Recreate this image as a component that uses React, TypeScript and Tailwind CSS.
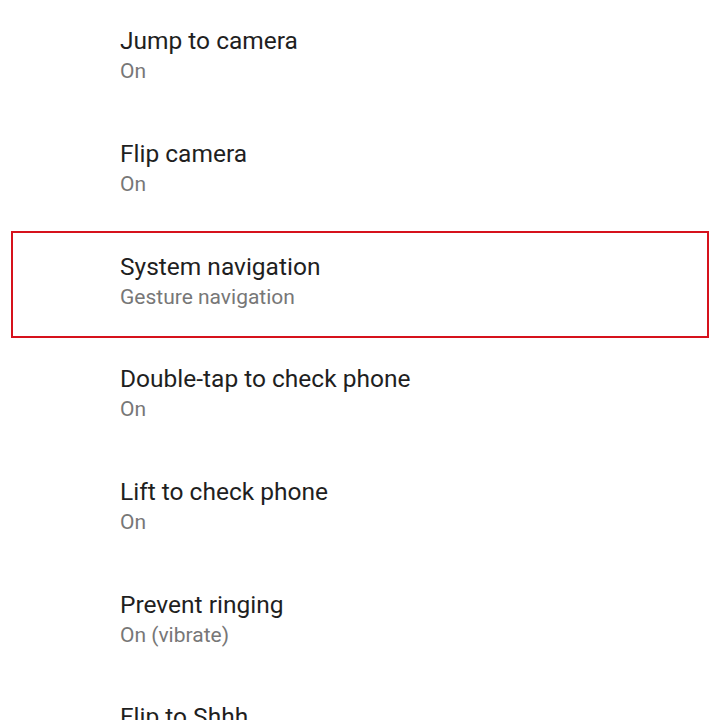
const items = [
  { title: "Jump to camera", subtitle: "On" },
  { title: "Flip camera", subtitle: "On" },
  { title: "System navigation", subtitle: "Gesture navigation" },
  { title: "Double-tap to check phone", subtitle: "On" },
  { title: "Lift to check phone", subtitle: "On" },
  { title: "Prevent ringing", subtitle: "On (vibrate)" },
  { title: "Flip to Shhh", subtitle: "\u00a0" },
];

export default function App() {
  return (
    <div className="relative h-[720px] w-[720px] overflow-hidden bg-white font-['Roboto',sans-serif]">
      {items.map((item) => (
        <div
          key={item.title}
          className="flex h-[112.67px] shrink-0 flex-col justify-center pl-[120px]"
        >
          <div className="text-[24.5px] leading-[30px] text-[#1f1f1f]">{item.title}</div>
          <div className="text-[21px] leading-[30px] text-[#777777]">{item.subtitle}</div>
        </div>
      ))}
      <div className="absolute left-[11px] top-[231px] h-[107px] w-[698px] border-2 border-[#d6121c]" />
    </div>
  );
}
